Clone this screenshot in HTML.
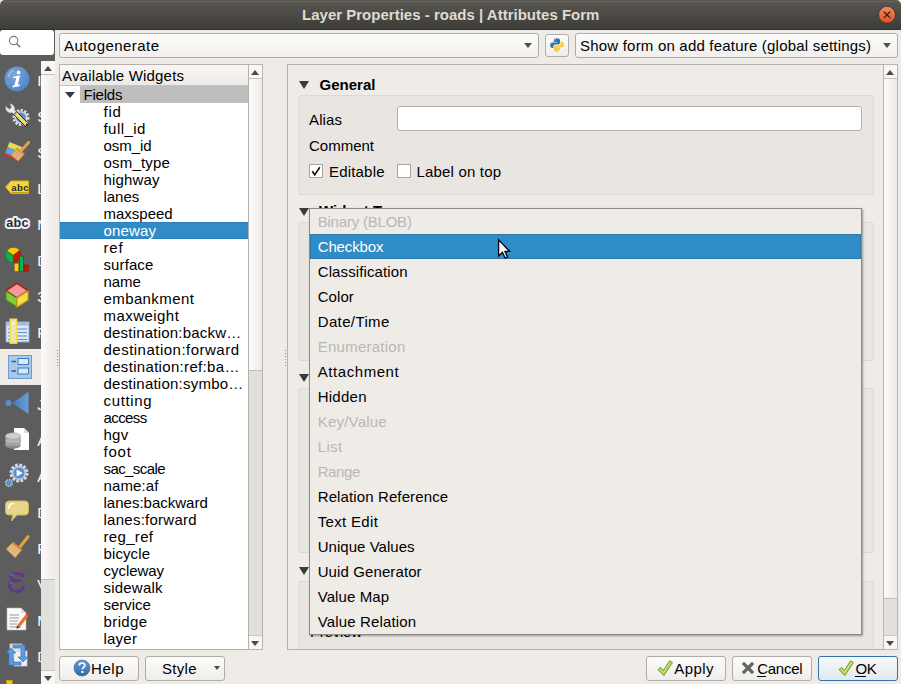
<!DOCTYPE html>
<html><head><meta charset="utf-8"><style>
*{margin:0;padding:0;box-sizing:border-box}
html,body{width:901px;height:684px;overflow:hidden;background:#efebe7;font-family:"Liberation Sans",sans-serif;font-size:15px;color:#000}
.a{position:absolute}
.t{position:absolute;white-space:nowrap;line-height:17px}
.btn{position:absolute;border:1px solid #b1ada6;border-radius:3px;background:linear-gradient(#fbfbfa,#efeeec)}
.combo{position:absolute;border:1px solid #b1ada6;border-radius:3px;background:linear-gradient(#fcfcfb,#f0efed)}
.arrow{position:absolute;width:0;height:0;border-left:4px solid transparent;border-right:4px solid transparent;border-top:5px solid #505050}
.sbup{position:absolute;left:0;right:0;height:14px;background:#f8f7f6}
.thumb{position:absolute;left:0;right:0;background:linear-gradient(90deg,#fcfbfb,#eeebe8);border-bottom:1px solid #c2beb8}
.tu{position:absolute;width:0;height:0;border-left:4px solid transparent;border-right:4px solid transparent;border-bottom:5px solid #4a4a4a}
.td{position:absolute;width:0;height:0;border-left:4px solid transparent;border-right:4px solid transparent;border-top:5px solid #4a4a4a}
.tri{position:absolute;width:0;height:0;border-left:5.5px solid transparent;border-right:5.5px solid transparent;border-top:8px solid #3a3a3a}
.grp{position:absolute;border:1px solid #dcdad6;border-radius:3px;background:#e9e6e2}
.cb{position:absolute;width:14px;height:14px;border:1px solid #a9a59e;background:#fff}
</style></head><body>
<div class="a" style="left:0;top:0;width:901px;height:30px;background:linear-gradient(#5a5851,#3d3c38);border-radius:5px 5px 0 0;border-bottom:1px solid #302f2b"></div>
<div class="a" style="left:4px;top:1px;width:893px;height:1px;background:#6d6a62;opacity:.7"></div>
<div class="t" style="left:302px;top:5.9px;line-height:17px;letter-spacing:0.010px;color:#dfdbd2;font-weight:bold;">Layer Properties - roads | Attributes Form</div>
<svg class="a" style="left:877px;top:5px" width="20" height="20" viewBox="0 0 20 20">
<defs><linearGradient id="cg" x1="0" y1="0" x2="0" y2="1"><stop offset="0" stop-color="#f5875c"/><stop offset="1" stop-color="#e0531f"/></linearGradient></defs>
<circle cx="10" cy="9.8" r="8.8" fill="#2e2b27" opacity=".5"/>
<circle cx="10" cy="9.8" r="8" fill="url(#cg)"/>
<path d="M7.2 7 L12.8 12.6 M12.8 7 L7.2 12.6" stroke="#2a2620" stroke-width="1.3" stroke-linecap="round"/>
</svg>
<div class="a" style="left:0;top:30px;width:55px;height:654px;background:#5d5d5d"></div>
<div class="a" style="left:0;top:30px;width:54px;height:25px;background:#fff;border-radius:3px"></div>
<svg class="a" style="left:8px;top:35px" width="14" height="14" viewBox="0 0 14 14"><circle cx="5.6" cy="5.6" r="4.2" fill="none" stroke="#7a7a7a" stroke-width="1.1"/><path d="M8.6 8.6 L12.2 12.2" stroke="#7a7a7a" stroke-width="1.5"/></svg>
<div class="a" style="left:0;top:349px;width:41px;height:36px;background:#efebe7"></div>
<div class="a" style="left:0;top:55px;width:41px;height:629px;overflow:hidden">
<svg class="a" style="left:5px;top:12px;overflow:visible" width="24" height="24" viewBox="0 0 24 24"><defs><radialGradient id="ig" cx=".4" cy=".35" r=".75"><stop offset="0" stop-color="#7ea8de"/><stop offset=".7" stop-color="#5a8cd0"/><stop offset="1" stop-color="#4a7cc0"/></radialGradient></defs>
<circle cx="12" cy="12" r="12.4" fill="url(#ig)"/>
<path d="M3.2 10 A9.5 9.5 0 0 1 8.5 3.2" stroke="#d0e0f4" stroke-width="1.1" fill="none" opacity=".7"/>
<circle cx="13.6" cy="5.4" r="1.9" fill="#fff"/>
<path d="M8.4 9.8 L15.2 8.3 L13 17 Q12.8 17.9 13.6 17.7 L15 17.3 L14.5 19.2 L7.4 20.6 L7.8 18.8 Q9.4 18.6 9.7 17.3 L11.1 11.8 Q11.2 11.1 10.4 11.1 L8.2 11.2 Z" fill="#fff"/></svg>
<div class="t" style="left:37.2px;top:16.8px;line-height:17px;color:#fff;">Information</div>
<svg class="a" style="left:5px;top:48px;overflow:visible" width="24" height="24" viewBox="0 0 24 24"><circle cx="16" cy="14.5" r="7.2" fill="none" stroke="#e4e4e4" stroke-width="2.6" stroke-dasharray="2.2 1.5"/>
<circle cx="16" cy="14.5" r="5.6" fill="#5b8ed0" stroke="#dadada" stroke-width="1.4"/>
<path d="M0.8 3.6 Q0.4 8.6 4.8 9.8 L7.4 9.4 L11 13.2 L13.2 11 L9.6 7.2 Q10 2.2 5.2 0.8 L6.6 4.2 L4.4 6.4 Z" fill="#ececec" stroke="#c4c4c4" stroke-width=".6"/>
<path d="M8.8 11.6 L11.8 8.6 L23.4 20.6 L20.4 23.6 Z" fill="#ecd876" stroke="#222" stroke-width="1"/>
<circle cx="21.6" cy="21.8" r="1" fill="#222"/></svg>
<div class="t" style="left:37.2px;top:52.8px;line-height:17px;color:#fff;">Source</div>
<svg class="a" style="left:5px;top:84px;overflow:visible" width="24" height="24" viewBox="0 0 24 24"><path d="M4.5 3 L17.5 8.2 L15 13 L2.5 8 Z" fill="#e6dc52"/>
<path d="M2.5 8 L12 11.8 L7 17 L0 14 Z" fill="#6f9fd8"/>
<path d="M0 14 L7 17 L13 22 L-1 15.8 Z" fill="#e52a2a"/>
<path d="M-1 15.5 L0 14 L13 22 Z" fill="#d83030"/>
<path d="M6 16.2 L11.6 9.6 L19.2 15.2 L13.2 22 Z" fill="#e3b47a" stroke="#c58a40" stroke-width=".8"/>
<path d="M8 14 L15 19.5 M9.6 12 L16.6 17.5 M8.2 17.8 L14 11 M10.2 19.4 L16 12.6" stroke="#c99655" stroke-width=".5"/>
<path d="M11.5 9.6 L19.2 15.2" stroke="#d28a30" stroke-width="1.8"/>
<path d="M16 12 L23.6 3.4" stroke="#dca050" stroke-width="3" stroke-linecap="round"/></svg>
<div class="t" style="left:37.2px;top:88.8px;line-height:17px;color:#fff;">Symbology</div>
<svg class="a" style="left:5px;top:120px;overflow:visible" width="24" height="24" viewBox="0 0 24 24"><path d="M0.6 12 L6 6 L23.5 6 L23.5 18.5 L6 18.5 Z" fill="#f3d63c" stroke="#d8b21c" stroke-width="1"/>
<path d="M6.5 17.5 L23 17.5" stroke="#c9a010" stroke-width="1"/>
<text x="15.2" y="16" font-family="Liberation Sans" font-weight="bold" font-size="9.6" letter-spacing=".4" text-anchor="middle" fill="#2b2b2b">abc</text></svg>
<div class="t" style="left:37.2px;top:124.8px;line-height:17px;color:#fff;">Labels</div>
<svg class="a" style="left:5px;top:156px;overflow:visible" width="24" height="24" viewBox="0 0 24 24"><text x="12.5" y="15.6" font-family="Liberation Sans" font-weight="bold" font-size="12.6" letter-spacing=".3" text-anchor="middle" fill="#2a2d33" stroke="#eef0fa" stroke-width="4" paint-order="stroke" stroke-linejoin="round">abc</text></svg>
<div class="t" style="left:37.2px;top:160.8px;line-height:17px;color:#fff;">Masks</div>
<svg class="a" style="left:5px;top:192px;overflow:visible" width="24" height="24" viewBox="0 0 24 24"><path d="M8.4 8.2 L1.79 4.07 A7.8 7.8 0 0 1 14.55 3.40 Z" fill="#fad000"/><path d="M8.4 8.2 L14.55 3.40 A7.8 7.8 0 0 1 8.40 16.00 Z" fill="#cc1500"/><path d="M8.4 8.2 L8.40 16.00 A7.8 7.8 0 0 1 1.79 4.07 Z" fill="#10b050"/><circle cx="8.4" cy="8.2" r="7.8" fill="none" stroke="#1a5a30" stroke-width=".6" opacity=".6"/><path d="M1.79 4.07 L8.4 8.2 L14.55 3.40 M8.4 8.2 L8.40 16.00" stroke="#5a2a10" fill="none" stroke-width=".7" opacity=".7"/><rect x="9.6" y="16.6" width="3.8" height="7.6" fill="#fad000"/><rect x="14.6" y="9.2" width="3.8" height="15" fill="#10b050" stroke="#0a6a30" stroke-width=".8"/><rect x="19.2" y="18" width="4.2" height="6.2" fill="#cc1500" stroke="#801000" stroke-width=".6"/></svg>
<div class="t" style="left:37.2px;top:196.8px;line-height:17px;color:#fff;">Diagrams</div>
<svg class="a" style="left:5px;top:228px;overflow:visible" width="24" height="24" viewBox="0 0 24 24"><path d="M12 0.4 L23 7.6 L12 14.8 L1 7.6 Z" fill="#f59a9a" stroke="#b81a1a" stroke-width="1.6" stroke-linejoin="round"/>
<path d="M1 8 L12 15 L12 24 L1 17 Z" fill="#88cc3a" stroke="#4c8a1a" stroke-width="1.2" stroke-linejoin="round"/>
<path d="M23 8 L12 15 L12 24 L23 17 Z" fill="#f7dc4a" stroke="#c9a414" stroke-width="1.2" stroke-linejoin="round"/></svg>
<div class="t" style="left:37.2px;top:232.8px;line-height:17px;color:#fff;">3D View</div>
<svg class="a" style="left:5px;top:264px;overflow:visible" width="24" height="24" viewBox="0 0 24 24"><rect x="1" y="3" width="23" height="20" fill="#dfe7f2" stroke="#86a7d2" stroke-width="1"/>
<rect x="1.5" y="3.5" width="22" height="3" fill="#9dbbe4"/>
<path d="M3 10 H22 M3 13.5 H22 M3 17 H22 M3 20.5 H22" stroke="#5c8fd2" stroke-width="1.2"/>
<rect x="5.2" y="0.2" width="6.4" height="24" fill="#ece4b8" stroke="#f2e23a" stroke-width="1.4"/>
<rect x="7.4" y="3.4" width="2" height="2" fill="#fff"/></svg>
<div class="t" style="left:37.2px;top:268.8px;line-height:17px;color:#fff;">Fields</div>
<svg class="a" style="left:8px;top:300px;overflow:visible" width="24" height="24" viewBox="0 0 24 24"><rect x="0.5" y="0.5" width="23" height="23" fill="#aac8e6" stroke="#6a9fd4" stroke-width="1"/>
<path d="M3.5 6.5 H8 M3.5 16 H8" stroke="#2e5f8f" stroke-width="1.6"/>
<rect x="10" y="3.5" width="10.5" height="6" fill="#d8e8f6" stroke="#3f7cbd" stroke-width="1"/>
<rect x="10" y="13" width="10.5" height="6" fill="#d8e8f6" stroke="#3f7cbd" stroke-width="1"/></svg>
<div class="t" style="left:41px;top:304.8px;line-height:17px;color:#000;">Attributes Form</div>
<svg class="a" style="left:5px;top:336px;overflow:visible" width="24" height="24" viewBox="0 0 24 24"><defs><linearGradient id="jg" x1="0" x2="1"><stop offset="0" stop-color="#3f78b8"/><stop offset="1" stop-color="#6b9ed8"/></linearGradient></defs>
<circle cx="3.5" cy="12" r="2.9" fill="#5b8fd0"/>
<path d="M7 12 L23.5 1 L23.5 23 Z" fill="url(#jg)"/></svg>
<div class="t" style="left:37.2px;top:340.8px;line-height:17px;color:#fff;">Joins</div>
<svg class="a" style="left:5px;top:372px;overflow:visible" width="24" height="24" viewBox="0 0 24 24"><path d="M9 1 L19 1 L24 6 L24 23 L9 23 Z" fill="#fff"/><path d="M19 1 L19 6 L24 6" fill="#ddd"/>
<ellipse cx="8" cy="18.5" rx="7.6" ry="3.2" fill="#8a8a8a"/>
<rect x="0.4" y="9" width="15.2" height="9.5" fill="#a9a9a9"/>
<ellipse cx="8" cy="13.8" rx="7.6" ry="3" fill="#b7b7b7" stroke="#8c8c8c" stroke-width=".6"/>
<ellipse cx="8" cy="9" rx="7.6" ry="3.2" fill="#cfcfcf" stroke="#9a9a9a" stroke-width=".6"/></svg>
<div class="t" style="left:37.2px;top:376.8px;line-height:17px;color:#fff;">Auxiliary Storage</div>
<svg class="a" style="left:5px;top:408px;overflow:visible" width="24" height="24" viewBox="0 0 24 24"><circle cx="14" cy="10" r="8" fill="#5b8ed0" stroke="#dcdcdc" stroke-width="3" stroke-dasharray="2.6 1.6"/>
<circle cx="14" cy="10" r="6.2" fill="#5b8ed0" stroke="#e8e8e8" stroke-width="1"/>
<path d="M11.6 6.4 L17.8 10 L11.6 13.6 Z" fill="#fff"/>
<circle cx="4" cy="20" r="3.4" fill="#5b8fd0" stroke="#d8d8d8" stroke-width="1.2" stroke-dasharray="1.6 1"/></svg>
<div class="t" style="left:37.2px;top:412.8px;line-height:17px;color:#fff;">Actions</div>
<svg class="a" style="left:5px;top:444px;overflow:visible" width="24" height="24" viewBox="0 0 24 24"><path d="M4 2 H20 Q23.5 2 23.5 5.5 V12.5 Q23.5 16 20 16 H12 L6.5 22 L7.8 16 H4 Q0.5 16 0.5 12.5 V5.5 Q0.5 2 4 2 Z" fill="#e6d58a" stroke="#cdb85a" stroke-width="1"/>
<path d="M3.5 10 Q3.5 4.5 9 4.5" stroke="#fff" stroke-width="1.4" fill="none"/></svg>
<div class="t" style="left:37.2px;top:448.8px;line-height:17px;color:#fff;">Display</div>
<svg class="a" style="left:5px;top:480px;overflow:visible" width="24" height="24" viewBox="0 0 24 24"><path d="M14.5 12.5 L23 1.8" stroke="#dea040" stroke-width="3.2" stroke-linecap="round"/>
<path d="M1.3 14 L7.6 7.6 L16.6 15 L10.2 22.8 Z" fill="#e6c088" stroke="#c08838" stroke-width=".9"/>
<path d="M7.6 7.6 L16.6 15" stroke="#d08a2a" stroke-width="2.2"/>
<path d="M3.6 15.6 L9.8 9.6 M5.8 17.4 L12 11.2 M8 19.4 L14.2 13 M4 12.2 L12.4 20 M6 10.4 L14.4 18" stroke="#c99a55" stroke-width=".5"/></svg>
<div class="t" style="left:37.2px;top:484.8px;line-height:17px;color:#fff;">Rendering</div>
<svg class="a" style="left:5px;top:516px;overflow:visible" width="24" height="24" viewBox="0 0 24 24"><path d="M17.2 4.2 Q13 1.4 8.6 2.8 Q4.6 4.4 6.2 7.6 Q7.6 9.8 10.8 9.8 H14.8" fill="none" stroke="#5f3689" stroke-width="2.6" stroke-linecap="round"/>
<path d="M10.8 9.8 Q4.4 10.2 4.6 15 Q5 20.4 11.6 20.4 Q16.4 20.4 18.2 17" fill="none" stroke="#5f3689" stroke-width="2.8" stroke-linecap="round"/>
<circle cx="17.4" cy="4.6" r="1.9" fill="#5f3689"/><circle cx="18" cy="16.8" r="1.7" fill="#5f3689"/>
<path d="M6 5 Q7 3.6 8.6 3.2 M5.2 13 Q6 11.6 7.4 11.2" stroke="#a98ccc" stroke-width=".9" fill="none"/></svg>
<div class="t" style="left:37.2px;top:520.8px;line-height:17px;color:#fff;">Variables</div>
<svg class="a" style="left:5px;top:552px;overflow:visible" width="24" height="24" viewBox="0 0 24 24"><path d="M2 1 L16 1 L21 6 L21 23 L2 23 Z" fill="#fbfbfb" stroke="#bbb" stroke-width=".6"/><path d="M16 1 L16 6 L21 6 Z" fill="#ddd"/>
<path d="M4.5 8 H14 M4.5 11 H14 M4.5 14 H13 M4.5 17 H12 M4.5 20 H16" stroke="#999" stroke-width="1"/>
<path d="M12 18.5 L21 7 L23.5 9 L14.5 20.5 Z" fill="#e8752e"/><path d="M12 18.5 L14.5 20.5 L11.5 21.8 Z" fill="#333"/><path d="M21 7 L22.3 5.4 L24.5 7.4 L23.5 9 Z" fill="#d33"/></svg>
<div class="t" style="left:37.2px;top:556.8px;line-height:17px;color:#fff;">Metadata</div>
<svg class="a" style="left:5px;top:588px;overflow:visible" width="24" height="24" viewBox="0 0 24 24"><rect x="5" y="1" width="12" height="15" fill="#e2e2e2" stroke="#c8c8c8" stroke-width=".8"/>
<rect x="9" y="8" width="13" height="15" fill="#f0f0f0" stroke="#c8c8c8" stroke-width=".8"/>
<path d="M1 10 L6 5 L11 10 L8 10 L8 19 L16 19 L16 22 L4 22 L4 10 Z" fill="#5b9be6" stroke="#3d76c0" stroke-width=".7"/>
<path d="M23 14 L18 19 L13 14 L16 14 L16 5 L8 5 L8 2 L20 2 L20 14 Z" fill="#5b9be6" stroke="#3d76c0" stroke-width=".7"/></svg>
<div class="t" style="left:37.2px;top:592.8px;line-height:17px;color:#fff;">Dependencies</div>
<svg class="a" style="left:5px;top:624px;overflow:visible" width="24" height="24" viewBox="0 0 24 24"><rect x="1.6" y="1.4" width="5.6" height="6" fill="#f5c800" stroke="#e0a000" stroke-width=".6"/></svg>
<div class="t" style="left:37.2px;top:628.8px;line-height:17px;color:#fff;">Legend</div>
</div>
<div class="a" style="left:41px;top:61px;width:14px;height:623px;background:#e2e0dd"><div class="sbup" style="top:0;height:14px;border-bottom:1px solid #c2beb8"><div class="tu" style="left:3px;top:5px"></div></div><div class="thumb" style="top:14px;height:505px"></div><div class="sbup" style="top:609px;height:14px;border-top:1px solid #cbc8c3"><div class="td" style="left:3px;top:5px"></div></div></div>
<div class="a" style="left:57px;top:350px;width:1px;height:1px;background:#8f8c87"></div>
<div class="a" style="left:57px;top:353px;width:1px;height:1px;background:#8f8c87"></div>
<div class="a" style="left:57px;top:356px;width:1px;height:1px;background:#8f8c87"></div>
<div class="a" style="left:57px;top:359px;width:1px;height:1px;background:#8f8c87"></div>
<div class="a" style="left:57px;top:362px;width:1px;height:1px;background:#8f8c87"></div>
<div class="a" style="left:57px;top:365px;width:1px;height:1px;background:#8f8c87"></div>
<div class="a" style="left:285px;top:350px;width:1px;height:1px;background:#8f8c87"></div>
<div class="a" style="left:285px;top:353px;width:1px;height:1px;background:#8f8c87"></div>
<div class="a" style="left:285px;top:356px;width:1px;height:1px;background:#8f8c87"></div>
<div class="a" style="left:285px;top:359px;width:1px;height:1px;background:#8f8c87"></div>
<div class="a" style="left:285px;top:362px;width:1px;height:1px;background:#8f8c87"></div>
<div class="a" style="left:285px;top:365px;width:1px;height:1px;background:#8f8c87"></div>
<div class="combo" style="left:59px;top:33px;width:480px;height:25px"></div>
<div class="t" style="left:64px;top:37.2px;line-height:17px;letter-spacing:0.448px;">Autogenerate</div>
<div class="arrow" style="left:524px;top:43px"></div>
<div class="btn" style="left:545px;top:34px;width:24px;height:23px"></div>
<svg class="a" style="left:550px;top:38px" width="14" height="14" viewBox="0 0 14 14">
<path d="M6.8 0.3 C4.5 0.3 3.8 1.2 3.8 2.5 V4 H7.2 V4.6 H2.3 C0.9 4.6 0.2 5.6 0.2 7.3 C0.2 9 0.9 10.1 2.2 10.1 H3.3 V8.4 C3.3 7.2 4.3 6.4 5.4 6.4 H8.4 C9.4 6.4 10.1 5.6 10.1 4.6 V2.4 C10.1 1.1 9 0.3 6.8 0.3 Z" fill="#3b73a8"/>
<circle cx="5.3" cy="1.8" r=".6" fill="#fff"/>
<path d="M7.2 13.7 C9.5 13.7 10.2 12.8 10.2 11.5 V10 H6.8 V9.4 H11.7 C13.1 9.4 13.8 8.4 13.8 6.7 C13.8 5 13.1 3.9 11.8 3.9 H10.7 V5.6 C10.7 6.8 9.7 7.6 8.6 7.6 H5.6 C4.6 7.6 3.9 8.4 3.9 9.4 V11.6 C3.9 12.9 5 13.7 7.2 13.7 Z" fill="#f5cf3a"/>
<circle cx="8.7" cy="12.2" r=".6" fill="#fff"/>
</svg>
<div class="combo" style="left:575px;top:33px;width:323px;height:25px"></div>
<div class="t" style="left:580px;top:37.1px;line-height:17px;letter-spacing:0.204px;">Show form on add feature (global settings)</div>
<div class="arrow" style="left:883px;top:43px"></div>
<div class="a" style="left:59px;top:64px;width:190px;height:586px;background:#fff;border:1px solid #b5b1aa;border-right:none"></div>
<div class="a" style="left:60px;top:65px;width:188px;height:21px;background:linear-gradient(#f9f8f6,#ece9e5);border-bottom:1px solid #c6c2bc"></div>
<div class="a" style="left:248px;top:64px;width:1px;height:586px;background:#b5b1aa"></div>
<div class="t" style="left:62px;top:66.6px;line-height:17px;letter-spacing:0.190px;">Available Widgets</div>
<div class="a" style="left:80px;top:86px;width:168px;height:17px;background:#bebebe"></div>
<div class="tri" style="left:65px;top:92px;border-left-width:5px;border-right-width:5px;border-top-width:6px"></div>
<div class="t" style="left:83.5px;top:85.9px;line-height:17px;letter-spacing:-0.202px;">Fields</div>
<div class="t" style="left:103.5px;top:103.1px;line-height:17px;letter-spacing:0.800px;">fid</div>
<div class="t" style="left:103.5px;top:120.1px;line-height:17px;letter-spacing:0.435px;">full_id</div>
<div class="t" style="left:103.5px;top:137.1px;line-height:17px;letter-spacing:-0.031px;">osm_id</div>
<div class="t" style="left:103.5px;top:154.1px;line-height:17px;letter-spacing:0.195px;">osm_type</div>
<div class="t" style="left:103.5px;top:171.1px;line-height:17px;letter-spacing:0.178px;">highway</div>
<div class="t" style="left:103.5px;top:188.1px;line-height:17px;letter-spacing:-0.040px;">lanes</div>
<div class="t" style="left:103.5px;top:205.1px;line-height:17px;letter-spacing:-0.001px;">maxspeed</div>
<div class="a" style="left:60px;top:222px;width:188px;height:17px;background:#308cc6;border-top:1px solid #2b80bd;border-bottom:1px solid #2b80bd"></div>
<div class="t" style="left:103.5px;top:222.1px;line-height:17px;letter-spacing:0.180px;color:#fff;">oneway</div>
<div class="t" style="left:103.5px;top:239.1px;line-height:17px;letter-spacing:0.800px;">ref</div>
<div class="t" style="left:103.5px;top:256.1px;line-height:17px;letter-spacing:0.102px;">surface</div>
<div class="t" style="left:103.5px;top:273.1px;line-height:17px;letter-spacing:-0.074px;">name</div>
<div class="t" style="left:103.5px;top:290.1px;line-height:17px;letter-spacing:0.399px;">embankment</div>
<div class="t" style="left:103.5px;top:307.1px;line-height:17px;letter-spacing:0.450px;">maxweight</div>
<div class="t" style="left:103.5px;top:324.1px;line-height:17px;letter-spacing:0.204px;">destination:backw…</div>
<div class="t" style="left:103.5px;top:341.1px;line-height:17px;letter-spacing:0.487px;">destination:forward</div>
<div class="t" style="left:103.5px;top:358.1px;line-height:17px;letter-spacing:0.323px;">destination:ref:ba…</div>
<div class="t" style="left:103.5px;top:375.1px;line-height:17px;letter-spacing:0.229px;">destination:symbo…</div>
<div class="t" style="left:103.5px;top:392.1px;line-height:17px;letter-spacing:0.668px;">cutting</div>
<div class="t" style="left:103.5px;top:409.1px;line-height:17px;letter-spacing:-0.600px;">access</div>
<div class="t" style="left:103.5px;top:426.1px;line-height:17px;letter-spacing:0.258px;">hgv</div>
<div class="t" style="left:103.5px;top:443.1px;line-height:17px;letter-spacing:0.800px;">foot</div>
<div class="t" style="left:103.5px;top:460.1px;line-height:17px;letter-spacing:-0.588px;">sac_scale</div>
<div class="t" style="left:103.5px;top:477.1px;line-height:17px;letter-spacing:0.100px;">name:af</div>
<div class="t" style="left:103.5px;top:494.1px;line-height:17px;letter-spacing:0.006px;">lanes:backward</div>
<div class="t" style="left:103.5px;top:511.1px;line-height:17px;letter-spacing:0.255px;">lanes:forward</div>
<div class="t" style="left:103.5px;top:528.1px;line-height:17px;letter-spacing:0.329px;">reg_ref</div>
<div class="t" style="left:103.5px;top:545.1px;line-height:17px;letter-spacing:0.108px;">bicycle</div>
<div class="t" style="left:103.5px;top:562.1px;line-height:17px;letter-spacing:-0.036px;">cycleway</div>
<div class="t" style="left:103.5px;top:579.1px;line-height:17px;letter-spacing:0.211px;">sidewalk</div>
<div class="t" style="left:103.5px;top:596.1px;line-height:17px;letter-spacing:-0.035px;">service</div>
<div class="t" style="left:103.5px;top:613.1px;line-height:17px;letter-spacing:0.401px;">bridge</div>
<div class="t" style="left:103.5px;top:630.1px;line-height:17px;letter-spacing:0.222px;">layer</div>
<div class="a" style="left:249px;top:64px;width:14px;height:586px;background:#e2e0dd;border:1px solid #b9b5af;border-left:none"><div class="sbup" style="top:0;height:14px;border-bottom:1px solid #c2beb8"><div class="tu" style="left:2px;top:5px"></div></div><div class="thumb" style="top:14px;height:292px"></div><div class="sbup" style="top:570px;height:14px;border-top:1px solid #cbc8c3"><div class="td" style="left:2px;top:5px"></div></div></div>
<div class="a" style="left:287px;top:64px;width:611px;height:586px;border:1px solid #b5b1aa"></div>
<div class="a" style="left:288px;top:65px;width:595px;height:584px;overflow:hidden">
<div class="tri" style="left:11px;top:16px"></div>
<div class="t" style="left:31.5px;top:10.5px;line-height:17px;letter-spacing:0.023px;font-weight:bold;">General</div>
<div class="grp" style="left:10px;top:30px;width:576px;height:100px"></div>
<div class="t" style="left:21px;top:45.6px;line-height:17px;letter-spacing:0.122px;">Alias</div>
<div class="a" style="left:109px;top:41px;width:465px;height:25px;background:#fff;border:1px solid #b5b1aa;border-radius:3px"></div>
<div class="t" style="left:21px;top:71.9px;line-height:17px;letter-spacing:-0.003px;">Comment</div>
<div class="cb" style="left:21px;top:99px"></div>
<svg class="a" style="left:21px;top:99px" width="14" height="14"><path d="M3.2 7.2 L5.8 10.8 L10.8 3.2" fill="none" stroke="#111" stroke-width="1.6"/></svg>
<div class="t" style="left:41px;top:97.7px;line-height:17px;letter-spacing:0.185px;">Editable</div>
<div class="cb" style="left:109px;top:99px"></div>
<div class="t" style="left:128.5px;top:97.7px;line-height:17px;letter-spacing:0.175px;">Label on top</div>
<div class="tri" style="left:11px;top:143px"></div>
<div class="t" style="left:31px;top:137.3px;line-height:17px;font-weight:bold;">Widget Type</div>
<div class="grp" style="left:10px;top:157px;width:576px;height:139px"></div>
<div class="tri" style="left:11px;top:309px"></div>
<div class="t" style="left:31px;top:303.3px;line-height:17px;font-weight:bold;">Constraints</div>
<div class="grp" style="left:10px;top:323px;width:576px;height:165px"></div>
<div class="tri" style="left:11px;top:502px"></div>
<div class="t" style="left:31px;top:496.3px;line-height:17px;font-weight:bold;">Defaults</div>
<div class="grp" style="left:10px;top:516px;width:576px;height:119px"></div>
<div class="t" style="left:22px;top:557.9px;line-height:17px;letter-spacing:-0.225px;">Preview</div>
</div>
<div class="a" style="left:883px;top:64px;width:15px;height:586px;background:#e2e0dd;border:1px solid #b9b5af"><div class="sbup" style="top:0;height:14px;border-bottom:1px solid #c2beb8"><div class="tu" style="left:2px;top:5px"></div></div><div class="thumb" style="top:14px;height:520px"></div><div class="sbup" style="top:570px;height:14px;border-top:1px solid #cbc8c3"><div class="td" style="left:2px;top:5px"></div></div></div>
<div class="a" style="left:309px;top:208px;width:553px;height:427px;background:#efebe7;border:1px solid #8e8c88;box-shadow:1px 1px 2px rgba(0,0,0,.35)"></div>
<div class="t" style="left:317.7px;top:212.8px;line-height:17px;letter-spacing:-0.208px;color:#b9b8b6;">Binary (BLOB)</div>
<div class="a" style="left:310px;top:234px;width:551px;height:25px;background:#308cc6;border:1px solid #2a7ab0"></div>
<div class="t" style="left:317.7px;top:237.8px;line-height:17px;letter-spacing:-0.143px;color:#fff;">Checkbox</div>
<div class="t" style="left:317.7px;top:262.8px;line-height:17px;letter-spacing:0.110px;">Classification</div>
<div class="t" style="left:317.7px;top:287.8px;line-height:17px;letter-spacing:0.064px;">Color</div>
<div class="t" style="left:317.7px;top:312.8px;line-height:17px;letter-spacing:0.372px;">Date/Time</div>
<div class="t" style="left:317.7px;top:337.8px;line-height:17px;letter-spacing:0.255px;color:#b9b8b6;">Enumeration</div>
<div class="t" style="left:317.7px;top:362.8px;line-height:17px;letter-spacing:0.570px;">Attachment</div>
<div class="t" style="left:317.7px;top:387.8px;line-height:17px;letter-spacing:0.253px;">Hidden</div>
<div class="t" style="left:317.7px;top:412.8px;line-height:17px;letter-spacing:0.217px;color:#b9b8b6;">Key/Value</div>
<div class="t" style="left:317.7px;top:437.8px;line-height:17px;letter-spacing:0.353px;color:#b9b8b6;">List</div>
<div class="t" style="left:317.7px;top:462.8px;line-height:17px;letter-spacing:-0.400px;color:#b9b8b6;">Range</div>
<div class="t" style="left:317.7px;top:487.8px;line-height:17px;letter-spacing:0.117px;">Relation Reference</div>
<div class="t" style="left:317.7px;top:512.8px;line-height:17px;letter-spacing:0.334px;">Text Edit</div>
<div class="t" style="left:317.7px;top:537.8px;line-height:17px;letter-spacing:0.037px;">Unique Values</div>
<div class="t" style="left:317.7px;top:562.8px;line-height:17px;letter-spacing:0.104px;">Uuid Generator</div>
<div class="t" style="left:317.7px;top:587.8px;line-height:17px;letter-spacing:0.088px;">Value Map</div>
<div class="t" style="left:317.7px;top:612.8px;line-height:17px;letter-spacing:0.150px;">Value Relation</div>
<svg class="a" style="left:497px;top:238px" width="16" height="22" viewBox="0 0 16 22">
<defs><linearGradient id="cur" x1="0" x2="1"><stop offset="0" stop-color="#fff"/><stop offset="1" stop-color="#e6e6e6"/></linearGradient></defs>
<path d="M1.6 1.8 L1.6 18 L5.4 14.4 L8.2 20 L10.6 19 L8 13.5 L12.6 13.2 Z" fill="url(#cur)" stroke="#000" stroke-width="1.3" stroke-linejoin="miter"/>
</svg>
<div class="btn" style="left:59px;top:656px;width:80px;height:25px;"></div>
<div class="btn" style="left:145px;top:656px;width:80px;height:25px;"></div>
<div class="btn" style="left:646px;top:656px;width:80px;height:25px;"></div>
<div class="btn" style="left:732px;top:656px;width:80px;height:25px;"></div>
<div class="btn" style="left:818px;top:656px;width:80px;height:25px;border-color:#3672ab;background:linear-gradient(#f7f9fb,#e2e8ee)"></div>
<svg class="a" style="left:73px;top:659px" width="18" height="18" viewBox="0 0 18 18">
<defs><linearGradient id="hg" x1="0" y1="0" x2="0" y2="1"><stop offset="0" stop-color="#6b9fd3"/><stop offset="1" stop-color="#2f67a8"/></linearGradient></defs>
<circle cx="9" cy="9" r="8" fill="url(#hg)" stroke="#2d5f9a" stroke-width=".6"/>
<path d="M6.3 6.6 Q6.3 4 9 4 Q11.8 4 11.8 6.4 Q11.8 7.8 10.3 8.6 Q9.4 9.1 9.4 10.6" fill="none" stroke="#fff" stroke-width="1.7"/>
<rect x="8.4" y="12" width="2" height="2" fill="#fff"/>
</svg>
<div class="t" style="left:91px;top:659.9px;line-height:17px;letter-spacing:0.583px;">Help</div>
<div class="t" style="left:162px;top:659.9px;line-height:17px;letter-spacing:0.313px;">Style</div>
<div class="td" style="left:214px;top:666px;border-left-width:3.5px;border-right-width:3.5px;border-top-width:4px"></div>
<svg class="a" style="left:657px;top:660px" width="16" height="17" viewBox="0 0 16 17"><path d="M1 9.6 L3.6 7.4 L6.4 10.6 L12.6 0.8 L15.4 2.6 L6.8 15.6 Z" fill="#b3d35a" stroke="#6f9a2c" stroke-width="1" stroke-linejoin="round"/>
<path d="M3 9.4 L6.4 12.6 L13.4 2.4" fill="none" stroke="#d5ea8a" stroke-width="1"/></svg>
<div class="t" style="left:674.2px;top:659.9px;line-height:17px;letter-spacing:0.445px;">Apply</div>
<svg class="a" style="left:742px;top:662px" width="12" height="12" viewBox="0 0 12 12"><path d="M2 2 L10 10 M10 2 L2 10" stroke="#666" stroke-width="3.2" stroke-linecap="square"/></svg>
<div class="t" style="left:757.2px;top:659.9px;line-height:17px;letter-spacing:-0.258px;">Cancel</div>
<div class="a" style="left:757px;top:676px;width:9px;height:1px;background:#000"></div>
<svg class="a" style="left:838px;top:660px" width="16" height="17" viewBox="0 0 16 17"><path d="M1 9.6 L3.6 7.4 L6.4 10.6 L12.6 0.8 L15.4 2.6 L6.8 15.6 Z" fill="#b3d35a" stroke="#6f9a2c" stroke-width="1" stroke-linejoin="round"/>
<path d="M3 9.4 L6.4 12.6 L13.4 2.4" fill="none" stroke="#d5ea8a" stroke-width="1"/></svg>
<div class="t" style="left:855.6px;top:659.9px;line-height:17px;letter-spacing:-0.600px;">OK</div>
<div class="a" style="left:855px;top:676px;width:11px;height:1px;background:#000"></div>
</body></html>
